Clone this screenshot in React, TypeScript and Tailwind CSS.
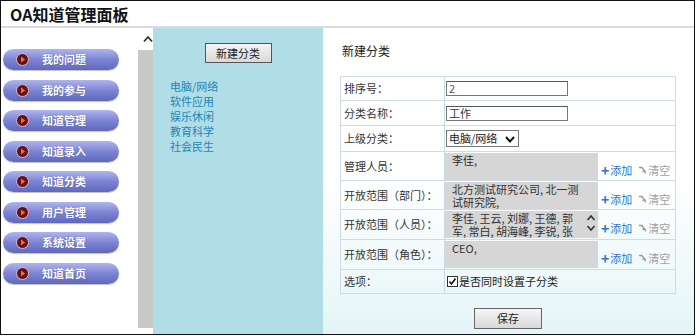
import React from 'react';

const menu = ['我的问题', '我的参与', '知道管理', '知道录入', '知道分类', '用户管理', '系统设置', '知道首页'];
const cats = ['电脑/网络', '软件应用', '娱乐休闲', '教育科学', '社会民生'];

function MenuIcon() {
  return (
    <svg width="13" height="13" viewBox="0 0 13 13" className="shrink-0">
      <circle cx="6.5" cy="6.5" r="6" fill="#5b1420" stroke="#e8b7c0" strokeWidth="1" />
      <path d="M5 3.6 L9.2 6.5 L5 9.4 Z" fill="#ff6a2c" />
    </svg>
  );
}

function AddClear() {
  return (
    <div className="flex items-center gap-[6px] pb-[3px] pl-[3px] text-[11px] leading-none whitespace-nowrap">
      <span className="flex items-center text-[#2a78c8]">
        <span className="font-bold text-[14px] leading-none mr-[1px]">+</span>添加
      </span>
      <span className="flex items-center text-[#a0a0a0]">
        <svg width="9" height="9" viewBox="0 0 9 9" className="mr-[1px]">
          <path d="M1 1.5 L4 1.5 L6.5 5 M4.5 5.5 L7 5 L7.5 7.5" stroke="#9a9a9a" strokeWidth="1.3" fill="none" />
        </svg>
        清空
      </span>
    </div>
  );
}

function Area({ children, scroll }: { children: React.ReactNode; scroll?: boolean }) {
  return (
    <div className="relative w-[153px] h-[27px] bg-[#d6d6d6] overflow-hidden text-[11px] leading-[13px] text-[#333] pl-[7px] pt-[1px] pr-[16px]">
      {children}
      {scroll && (
        <div className="absolute right-[2px] top-[2px] flex flex-col items-center">
          <svg width="10" height="10" viewBox="0 0 10 10">
            <path d="M1.5 7 L5 3 L8.5 7" stroke="#333" strokeWidth="1.6" fill="none" />
          </svg>
          <svg width="10" height="10" viewBox="0 0 10 10">
            <path d="M1.5 3 L5 7 L8.5 3" stroke="#333" strokeWidth="1.6" fill="none" />
          </svg>
        </div>
      )}
    </div>
  );
}

export default function App() {
  const td = 'border border-[#cfdbe2]';
  const label = `${td} pl-[3px] text-[11px] text-[#333] align-middle`;
  return (
    <div
      className="w-[695px] h-[335px] border border-[#111] bg-white flex flex-col overflow-hidden"
      style={{ fontFamily: '"Noto Sans CJK SC", "Noto Sans", sans-serif' }}
    >
      <div className="h-[27px] shrink-0 border-b-2 border-[#dcdcdc] flex items-center pl-[9px]">
        <span className="text-[16px] font-bold text-[#111] leading-none">OA知道管理面板</span>
      </div>
      <div className="flex flex-1 min-h-0">
        {/* sidebar */}
        <div className="w-[137px] shrink-0 flex flex-col gap-[9.5px] pt-[21px] pl-[2px]">
          {menu.map((m) => (
            <div
              key={m}
              className="w-[116px] h-[21px] rounded-full bg-gradient-to-b from-[#b0b5ee] via-[#7c84d3] to-[#6068bd] shadow-[0_1px_1px_rgba(0,0,0,0.25)] flex items-center pl-[13px] gap-[13px]"
            >
              <MenuIcon />
              <span className="text-[11px] font-bold text-white leading-none [text-shadow:0_0_1px_rgba(40,40,90,0.6)]">{m}</span>
            </div>
          ))}
        </div>
        {/* scrollbar */}
        <div className="w-[15px] shrink-0 flex flex-col pb-[6px]">
          <div className="h-[22px] flex items-center justify-center pl-[4px]">
            <svg width="10" height="8" viewBox="0 0 10 8">
              <path d="M1 6.5 L5 2 L9 6.5" stroke="#333" strokeWidth="1.8" fill="none" />
            </svg>
          </div>
          <div className="flex-1 bg-[#c8c8c8]" />
        </div>
        {/* categories */}
        <div className="w-[170px] shrink-0 bg-[#b1dee6] flex flex-col items-center pt-[15px]">
          <button className="w-[67px] h-[20px] border border-[#555] bg-gradient-to-b from-[#f4f4f4] to-[#d9d9d9] text-[11px] text-[#222] leading-none">
            新建分类
          </button>
          <div className="self-start pl-[17px] pt-[16px] flex flex-col">
            {cats.map((c) => (
              <span key={c} className="text-[11px] leading-[15px] text-[#2385b8]">{c}</span>
            ))}
          </div>
        </div>
        {/* form */}
        <div className="flex-1 bg-gradient-to-b from-white via-white to-[#e4f5f7] pl-[17px] pt-[14px] pr-[4px]">
          <div className="h-[34px] text-[12px] text-[#222] leading-none pl-[2px] pt-[3px]">新建分类</div>
          <table className="w-[336px] border-collapse">
            <tbody>
              <tr className="h-[24px]">
                <td className={`${label} w-[104px]`}>排序号：</td>
                <td className={`${td} pl-[1px]`}>
                  <div className="w-[122px] h-[15px] border border-[#777] border-t-[#555] text-[11px] leading-[13px] text-[#555] pl-[2px]">2</div>
                </td>
              </tr>
              <tr className="h-[25px]">
                <td className={label}>分类名称：</td>
                <td className={`${td} pl-[1px]`}>
                  <div className="w-[122px] h-[15px] border border-[#777] border-t-[#555] text-[11px] leading-[13px] text-[#333] pl-[2px]">工作</div>
                </td>
              </tr>
              <tr className="h-[26px]">
                <td className={label}>上级分类：</td>
                <td className={`${td} pl-[1px]`}>
                  <div className="w-[73px] h-[17px] border border-[#777] flex items-center justify-between pl-[2px] pr-[3px] text-[11px] text-[#222] leading-none">
                    电脑/网络
                    <svg width="10" height="8" viewBox="0 0 10 8">
                      <path d="M1 2 L5 6.5 L9 2" stroke="#111" strokeWidth="2" fill="none" />
                    </svg>
                  </div>
                </td>
              </tr>
              <tr className="h-[29px]">
                <td className={label}>管理人员：</td>
                <td className={`${td} pl-0 align-top pt-[1px]`}>
                  <div className="flex items-end">
                    <Area>李佳,</Area>
                    <AddClear />
                  </div>
                </td>
              </tr>
              <tr className="h-[29px]">
                <td className={label}>开放范围（部门）：</td>
                <td className={`${td} pl-0 align-top pt-[1px]`}>
                  <div className="flex items-end">
                    <Area>北方测试研究公司, 北一测试研究院,</Area>
                    <AddClear />
                  </div>
                </td>
              </tr>
              <tr className="h-[30px]">
                <td className={label}>开放范围（人员）：</td>
                <td className={`${td} pl-0 align-top pt-[1px]`}>
                  <div className="flex items-end">
                    <Area scroll>李佳, 王云, 刘娜, 王德, 郭军, 常白, 胡海峰, 李锐, 张</Area>
                    <AddClear />
                  </div>
                </td>
              </tr>
              <tr className="h-[30px]">
                <td className={label}>开放范围（角色）：</td>
                <td className={`${td} pl-0 align-top pt-[1px]`}>
                  <div className="flex items-end">
                    <Area>CEO,</Area>
                    <AddClear />
                  </div>
                </td>
              </tr>
              <tr className="h-[24px]">
                <td className={label}>选项：</td>
                <td className={`${td} pl-[2px]`}>
                  <div className="flex items-center text-[11px] text-[#222] leading-none">
                    <span className="w-[11px] h-[11px] border border-[#333] bg-white flex items-center justify-center mr-[1px]">
                      <svg width="9" height="9" viewBox="0 0 9 9">
                        <path d="M1.5 4.5 L3.5 7 L7.5 1.5" stroke="#111" strokeWidth="1.6" fill="none" />
                      </svg>
                    </span>
                    是否同时设置子分类
                  </div>
                </td>
              </tr>
            </tbody>
          </table>
          <div className="w-[336px] flex justify-center pt-[14px]">
            <button className="w-[68px] h-[21px] border border-[#666] bg-gradient-to-b from-[#f6f6f6] to-[#d8d8d8] text-[11px] text-[#222] leading-none">
              保存
            </button>
          </div>
        </div>
      </div>
    </div>
  );
}
